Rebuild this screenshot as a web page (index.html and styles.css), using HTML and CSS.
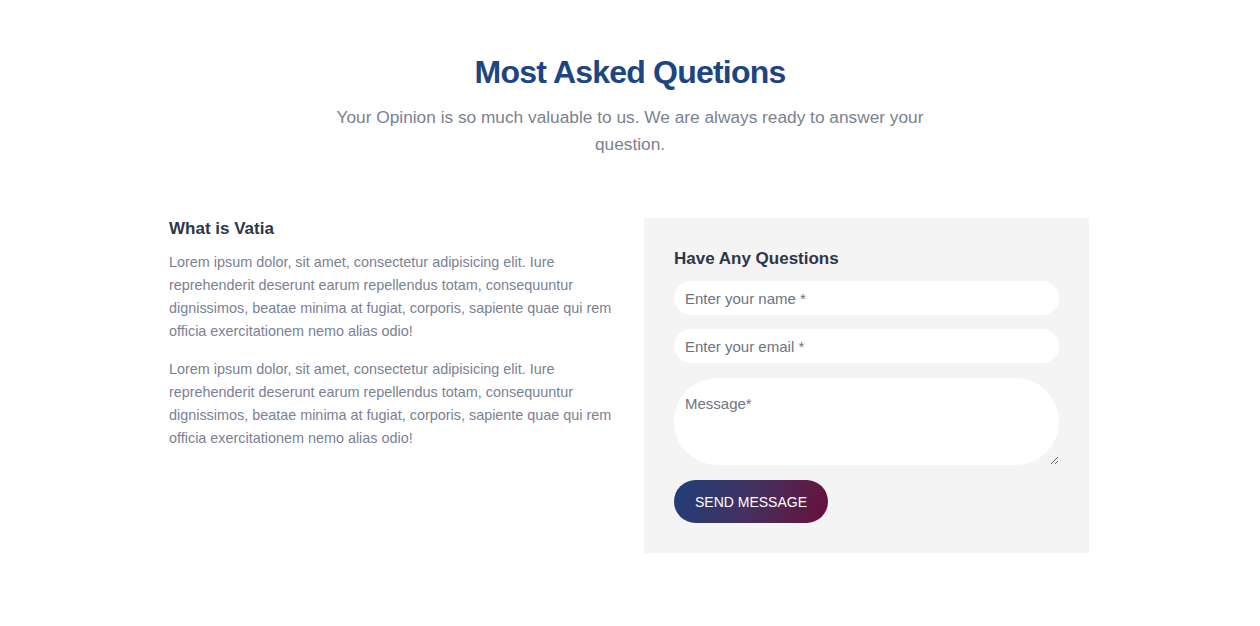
FILE: index.html
```html
<!DOCTYPE html>
<html lang="en">
<head>
<meta charset="utf-8">
<title>Most Asked Quetions</title>
<link rel="stylesheet" href="styles.css">
</head>
<body>
<section class="faq">
  <header class="faq-head">
    <h1 class="faq-title">Most Asked Quetions</h1>
    <p class="faq-sub">Your Opinion is so much valuable to us. We are always ready to answer your question.</p>
  </header>
  <div class="faq-grid">
    <div class="about">
      <h3 class="about-title">What is Vatia</h3>
      <p class="about-text">Lorem ipsum dolor, sit amet, consectetur adipisicing elit. Iure reprehenderit deserunt earum repellendus totam, consequuntur dignissimos, beatae minima at fugiat, corporis, sapiente quae qui rem officia exercitationem nemo alias odio!</p>
      <p class="about-text">Lorem ipsum dolor, sit amet, consectetur adipisicing elit. Iure reprehenderit deserunt earum repellendus totam, consequuntur dignissimos, beatae minima at fugiat, corporis, sapiente quae qui rem officia exercitationem nemo alias odio!</p>
    </div>
    <form class="ask">
      <h3 class="ask-title">Have Any Questions</h3>
      <input class="field" type="text" placeholder="Enter your name *">
      <input class="field" type="email" placeholder="Enter your email *">
      <textarea class="field area" placeholder="Message*"></textarea>
      <button class="send" type="button">SEND MESSAGE</button>
    </form>
  </div>
</section>
</body>
</html>
```
FILE: styles.css
```css
* { box-sizing: border-box; }
body {
  margin: 0;
  background: #fff;
  font-family: "Liberation Sans", Arial, sans-serif;
}
.faq {
  padding: 52px 0 60px;
}
.faq-head {
  text-align: center;
}
.faq-title {
  margin: 0;
  font-size: 32px;
  line-height: 40px;
  font-weight: 700;
  color: #1d4581;
  letter-spacing: -0.8px;
}
.faq-sub {
  margin: 12px auto 0;
  max-width: 610px;
  font-size: 17.3px;
  line-height: 27px;
  color: #7c8190;
}
.faq-grid {
  width: 920px;
  margin: 60px 0 0 calc(50% - 461px);
  display: grid;
  grid-template-columns: 1fr 1fr;
  column-gap: 30px;
  align-items: start;
}
.about-title {
  margin: 0 0 11px;
  font-size: 17px;
  line-height: 22px;
  color: #2d3748;
}
.about-text {
  margin: 0 0 15px;
  font-size: 14.4px;
  line-height: 23px;
  color: #7a8193;
}
.ask {
  background: #f4f4f4;
  padding: 29px 30px 30px;
  display: flex;
  flex-direction: column;
  align-items: flex-start;
}
.ask-title {
  margin: 0 0 10px;
  font-size: 17px;
  line-height: 24px;
  color: #2d3748;
}
.field {
  width: 100%;
  height: 34px;
  border: none;
  border-radius: 17px;
  background: #fff;
  padding: 0 11px;
  margin-bottom: 14px;
  font-family: "Liberation Sans", Arial, sans-serif;
  font-size: 15px;
  color: #333;
  outline: none;
}
.field::placeholder {
  color: #6e7480;
}
.area {
  height: 87px;
  margin-top: 1px;
  margin-bottom: 15px;
  border-radius: 44px;
  padding: 17px 11px 15px;
  resize: vertical;
}
.send {
  height: 43px;
  padding: 0 21px;
  border: none;
  border-radius: 22px;
  background: linear-gradient(110deg, #1f3f79 0%, #44305f 50%, #6a0f3a 100%);
  color: #fff;
  font-family: "Liberation Sans", Arial, sans-serif;
  font-size: 14px;
  cursor: pointer;
}
```
